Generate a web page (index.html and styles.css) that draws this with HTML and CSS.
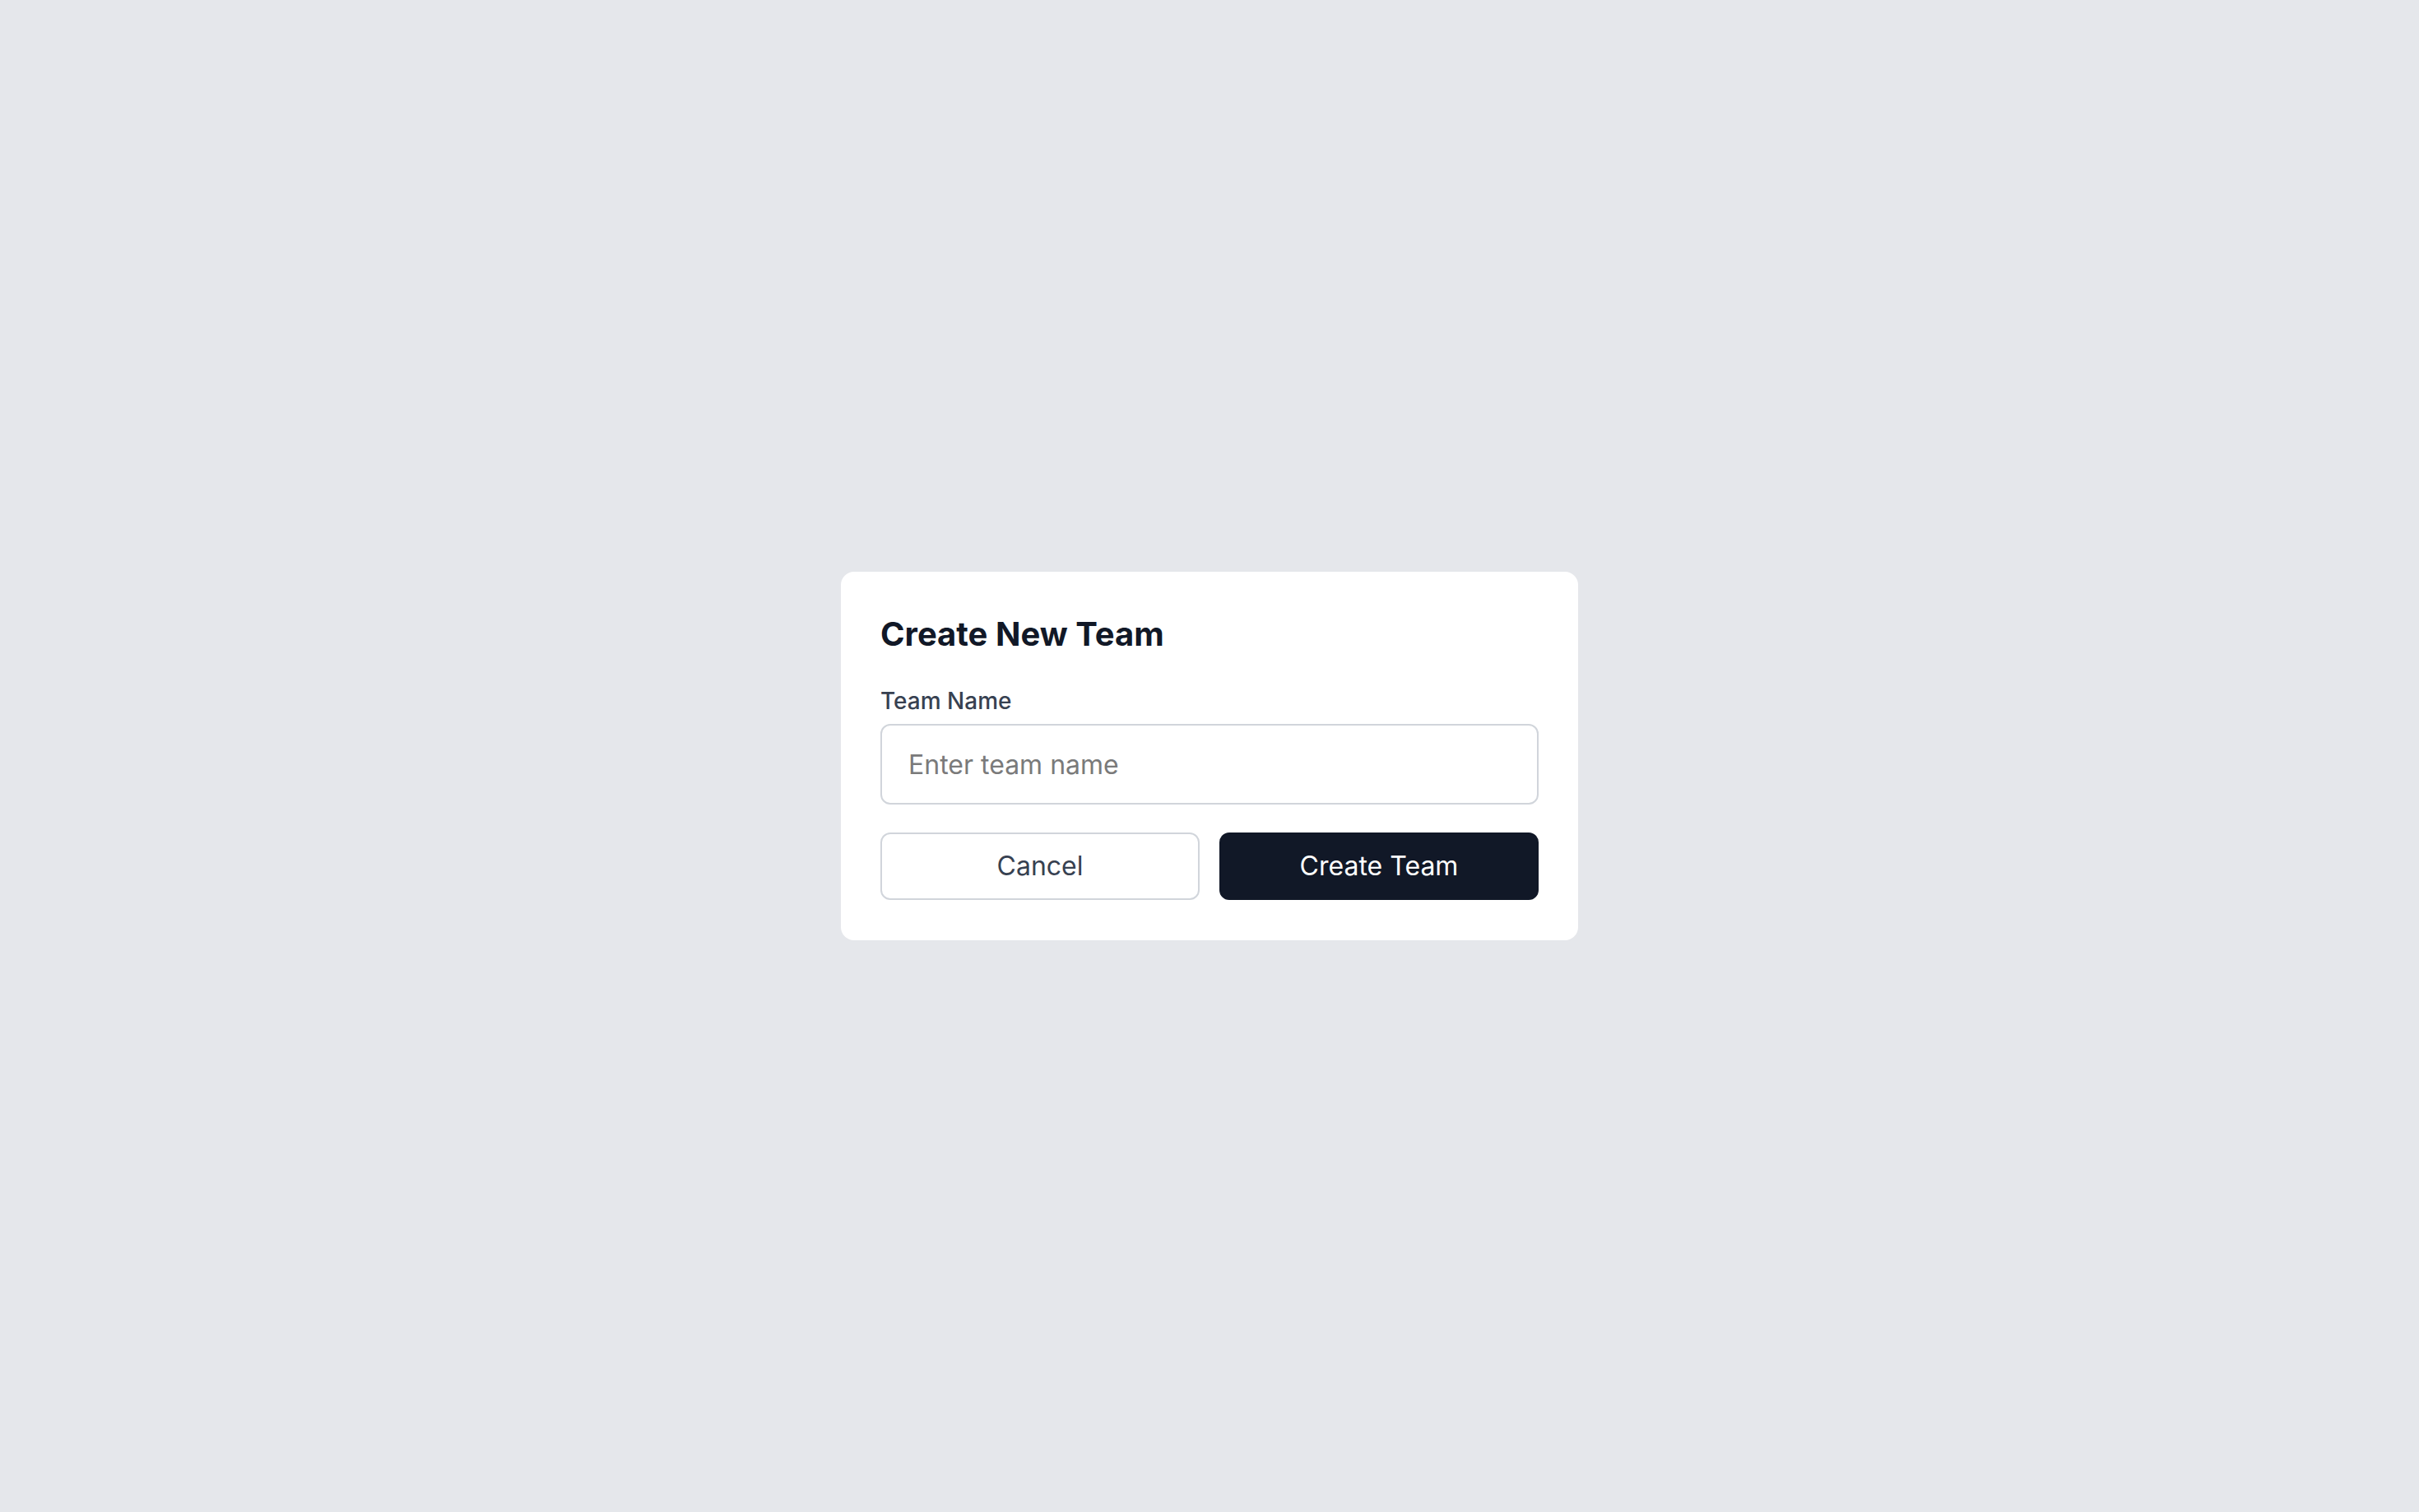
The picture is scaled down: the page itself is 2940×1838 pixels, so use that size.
FILE: index.html
```html
<!DOCTYPE html>
<html lang="en">
<head>
<meta charset="utf-8">
<title>Create New Team</title>
<link rel="stylesheet" href="styles.css">
</head>
<body>
<div class="overlay">
  <div class="modal">
    <h2 class="modal-title">Create New Team</h2>
    <label class="field-label" for="team-name">Team Name</label>
    <input class="field-input" id="team-name" type="text" placeholder="Enter team name">
    <div class="actions">
      <button class="btn btn-secondary" type="button">Cancel</button>
      <button class="btn btn-primary" type="button">Create Team</button>
    </div>
  </div>
</div>
</body>
</html>
```

FILE: styles.css
```css
* { box-sizing: border-box; }
html, body {
  margin: 0;
  padding: 0;
  height: 100%;
}
body {
  background: #e5e7eb;
  font-family: Inter, "Noto Sans", sans-serif;
}
.overlay {
  height: 100vh;
  display: flex;
  align-items: center;
  justify-content: center;
}
.modal {
  width: 896px;
  height: 448px;
  background: #ffffff;
  border-radius: 16px;
  padding: 48px;
  display: flex;
  flex-direction: column;
}
.modal-title {
  margin: 0 0 33px 0;
  font-size: 40px;
  line-height: 56px;
  font-weight: 700;
  color: #111827;
}
.field-label {
  display: block;
  font-size: 28px;
  line-height: 40px;
  font-weight: 500;
  color: #374151;
  margin-bottom: 8px;
}
.field-input {
  display: block;
  width: 100%;
  height: 98px;
  padding: 0 32px;
  border: 2px solid #d1d5db;
  border-radius: 12px;
  font-family: Inter, "Noto Sans", sans-serif;
  font-size: 32px;
  line-height: 48px;
  color: #111827;
  background: #fff;
  outline: none;
}
.field-input::placeholder {
  color: #7a7a7a;
}
.actions {
  display: flex;
  gap: 24px;
  margin-top: 34px;
}
.btn {
  flex: 1;
  height: 82px;
  border-radius: 12px;
  font-family: Inter, "Noto Sans", sans-serif;
  font-size: 32px;
  line-height: 48px;
  font-weight: 400;
  cursor: pointer;
}
.btn-secondary {
  background: #ffffff;
  border: 2px solid #d1d5db;
  color: #374151;
}
.btn-primary {
  background: #111827;
  border: 2px solid #111827;
  color: #ffffff;
}
```
